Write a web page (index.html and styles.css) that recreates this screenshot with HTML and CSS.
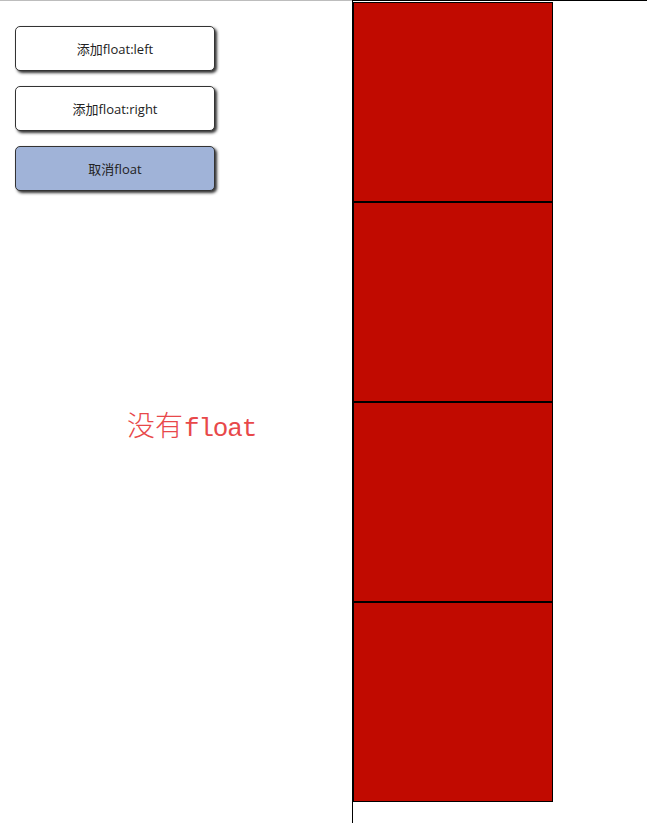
FILE: index.html
```html
<!DOCTYPE html>
<html lang="zh">
<head>
<meta charset="utf-8">
<title>float demo</title>
<link rel="stylesheet" href="styles.css">
</head>
<body>
<div class="page">
  <div class="panel">
    <div class="buttons">
      <button class="btn">添加float:left</button>
      <button class="btn">添加float:right</button>
      <button class="btn btn-active">取消float</button>
    </div>
    <div class="status"><span class="cjk">没有</span>float</div>
  </div>
  <div class="stage">
    <div class="box"></div>
    <div class="box"></div>
    <div class="box"></div>
    <div class="box"></div>
  </div>
</div>
</body>
</html>
```
FILE: styles.css
```css
html, body {
  margin: 0;
  padding: 0;
  background: #fff;
}
.page {
  display: flex;
  min-height: 823px;
}
.panel {
  width: 352px;
  flex: none;
  border-top: 1px solid #bdbdbd;
}
.buttons {
  display: flex;
  flex-direction: column;
  gap: 15px;
  padding: 25px 0 0 15px;
}
.btn {
  width: 200px;
  height: 45px;
  box-sizing: border-box;
  border: 1px solid #333;
  border-radius: 5px;
  background: #fff;
  box-shadow: 2px 2px 3px #333;
  font-family: "Open Sans", "Noto Sans CJK SC", sans-serif;
  font-size: 13px;
  color: #222;
  padding: 0;
  cursor: pointer;
}
.btn-active {
  background: #a0b3d8;
}
.status {
  margin-top: 216px;
  padding-left: 127px;
  font-family: "Liberation Mono", "Noto Sans CJK SC", monospace;
  font-size: 26px;
  line-height: 34px;
  color: #e8484a;
  letter-spacing: -1.2px;
}
.status .cjk {
  font-family: "Noto Sans CJK SC", sans-serif;
  font-weight: 300;
  font-size: 28px;
  letter-spacing: 0;
  margin-right: 1px;
}
.stage {
  flex: 1;
  border-left: 1px solid #000;
  border-top: 1px solid #000;
  padding-top: 1px;
}
.box {
  width: 200px;
  height: 200px;
  box-sizing: border-box;
  border: 1px solid #000;
  background: #c10a00;
}
```
